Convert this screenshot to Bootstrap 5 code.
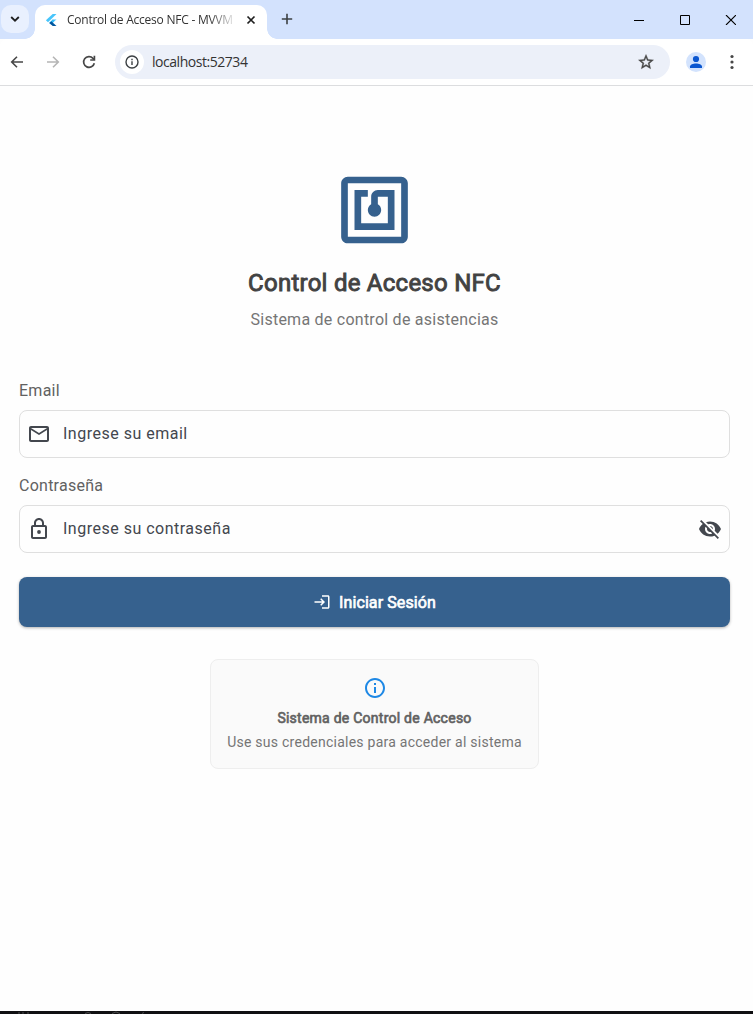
<!DOCTYPE html>
<html lang="es">
<head>
<meta charset="utf-8">
<meta name="viewport" content="width=device-width, initial-scale=1">
<title>Control de Acceso NFC - MVVM</title>
<link href="https://cdn.jsdelivr.net/npm/bootstrap@5.3.0/dist/css/bootstrap.min.css" rel="stylesheet">
<script src="https://cdn.jsdelivr.net/npm/bootstrap@5.3.0/dist/js/bootstrap.bundle.min.js" defer></script>
<style>
html,body{height:100%}
body{font-family:Roboto,sans-serif;background:#fefefe;color:#424242;overflow:hidden}
svg{display:block;flex:none}
.chrome-font{font-family:"Open Sans","Noto Sans",sans-serif}
.tabstrip{height:39px;background:#d3e2fd}
.tab-search{width:28px;height:28px;margin:5px 0 0 1px;border-radius:10px;background:#e9f0fe}
.browser-tab{width:232px;height:34px;margin:5px 0 0 6px;background:#fff;border-radius:10px 10px 0 0;position:relative;padding:0 0 4px 10px}
.browser-tab::before,.browser-tab::after{content:"";position:absolute;bottom:0;width:10px;height:10px}
.browser-tab::before{left:-10px;background:radial-gradient(circle at 0 0,transparent 9.5px,#fff 10px)}
.browser-tab::after{right:-10px;background:radial-gradient(circle at 100% 0,transparent 9.5px,#fff 10px)}
.tab-title{width:168px;margin:0 11px 0 10px;font-size:12px;letter-spacing:-.24px;line-height:18px;color:#333;white-space:nowrap;overflow:hidden;-webkit-mask-image:linear-gradient(90deg,#000 142px,transparent 170px)}
.new-tab{margin:13px 0 0 14px}
.win{width:46px}
.toolbar{height:47px;padding-left:9px;background:#fff;border-bottom:1px solid #dcdddf;border-radius:8px 8px 0 0}
.nav-icons{gap:20px}
.address{width:555px;height:34px;margin-left:18px;padding:0 15px 0 5px;border-radius:17px;background:#ecf0f9}
.site-info{width:24px;height:24px;border-radius:50%;background:#fff}
.url{font-size:14px;letter-spacing:-.46px;margin-left:8px;color:#333;line-height:20px}
.avatar{width:20px;height:20px;margin:0 24px 0 16px;border-radius:50%;background:#d3e3fd;overflow:hidden}
.page{padding:84px 23px 0 19px;height:925px}
.heavy{-webkit-text-stroke:.65px currentColor;font-weight:400}
.headline{font-size:24px;line-height:32px;letter-spacing:.25px;margin:17px 0 0;color:#424242;-webkit-text-stroke-width:.9px}
.tagline{font-size:16px;line-height:24px;letter-spacing:.25px;margin:9px 0 47px;color:#757575}
.field-label{font-size:16px;line-height:24px;letter-spacing:.25px;color:#616161;margin:0 0 7px;display:block}
.field{height:48px;margin-bottom:16px;border:1px solid #dfdfdf;border-radius:8px;padding:0 7px;background:#fefefe;color:#43474e;font-size:16px;letter-spacing:.5px;line-height:24px;cursor:text}
.field span{margin-left:12px}
.login{height:50px;margin-top:24px;border:0;border-radius:8px;background:#36618e;color:#fff;font-size:16px;line-height:20px;box-shadow:0 1px 3px rgba(0,0,0,.3)}
.login:hover{background:#36618e;color:#fff}
.login span{letter-spacing:.1px;padding-top:1px}
.hint{width:329px;height:110px;margin:32px auto 0;padding-top:16px;border:1px solid #eee;border-radius:8px;background:#fafafa;font-size:14px;line-height:20px}
.hint-title{color:#616161;margin-top:8px;letter-spacing:.25px}
.hint-text{color:#757575;margin-top:4px;letter-spacing:.25px}
.bottom-edge{height:3px;background:#101012}
</style>
</head>
<body>
<header class="chrome-font">
  <div class="tabstrip d-flex">
    <div class="tab-search d-flex align-items-center justify-content-center">
      <svg width="10" height="8" viewBox="0 0 10 8" fill="none" stroke="#1f1f1f" stroke-width="1.8"><path d="M1.2 2 5 5.7 8.8 2"/></svg>
    </div>
    <div class="browser-tab d-flex align-items-center">
      <svg width="12" height="14" viewBox="0 0 12 14"><path d="M7.7 1h3.8L3 9.3.9 7.2z" fill="#47c5fb"/><path d="M7.7 6.5h3.8L7.2 10 5 10z" fill="#47c5fb"/><path d="M4.1 9.9 7.7 6.5 9.6 7.8 6.4 11.8z" fill="#38bdf8"/><path d="m4.3 10 2-1.8L11.5 13H7.7z" fill="#00569e"/></svg>
      <div class="tab-title">Control de Acceso NFC - MVVM</div>
      <svg width="10" height="10" viewBox="0 0 10 10" stroke="#1f1f1f" stroke-width="1.7"><path d="m1.5 1.5 7 7m0-7-7 7"/></svg>
    </div>
    <svg class="new-tab" width="12" height="12" viewBox="0 0 12 12" stroke="#3c4043" stroke-width="1.6"><path d="M6 .8v10.4M.8 6h10.4"/></svg>
    <div class="ms-auto d-flex">
      <div class="win d-flex align-items-center justify-content-center"><svg width="12" height="10" viewBox="0 0 12 10"><path d="M2 5h10v1H2z"/></svg></div>
      <div class="win d-flex align-items-center justify-content-center"><svg width="12" height="10" viewBox="0 0 12 10" fill="none" stroke="#000"><path d="M2.5.5h9v9h-9z"/></svg></div>
      <div class="win d-flex align-items-center justify-content-center"><svg width="12" height="10" viewBox="0 0 12 10" stroke="#000" stroke-width="1.1"><path d="m2 0 10 10M12 0 2 10"/></svg></div>
    </div>
  </div>
  <div class="toolbar d-flex align-items-center">
    <div class="nav-icons d-flex">
      <svg width="16" height="16" viewBox="0 0 16 16" fill="none" stroke="#474747" stroke-width="1.6"><path d="M14 8H3M8 2.7 2.7 8 8 13.3"/></svg>
      <svg width="16" height="16" viewBox="0 0 16 16" fill="none" stroke="#b5b5b5" stroke-width="1.6"><path d="M2 8h11M8 2.7 13.3 8 8 13.3"/></svg>
      <svg width="16" height="16" viewBox="0 0 16 16" fill="none" stroke="#474747" stroke-width="1.7"><path d="M13.3 9.2A5.4 5.4 0 1 1 12 4.3l1 1"/><path d="M13.4 1.8V6H9.2"/></svg>
    </div>
    <div class="address d-flex align-items-center">
      <div class="site-info d-flex align-items-center justify-content-center"><svg width="14" height="14" viewBox="0 0 14 14" fill="none" stroke="#3c4043" stroke-width="1.4"><circle cx="7" cy="7" r="6"/><path d="M7 6.3V10M7 3.8v1.4"/></svg></div>
      <div class="url">localhost:52734</div>
      <svg class="ms-auto" width="18" height="18" viewBox="0 0 24 24" fill="#474747" stroke="#474747" stroke-width=".5"><path d="m22 9.24-7.19-.62L12 2 9.19 8.63 2 9.24l5.46 4.73L5.82 21 12 17.27 18.18 21l-1.63-7.03zM12 15.4l-3.76 2.27 1-4.28-3.32-2.88 4.38-.38L12 6.1l1.71 4.04 4.38.38-3.32 2.88 1 4.28z"/></svg>
    </div>
    <div class="avatar"><svg width="20" height="20" viewBox="0 0 20 20" fill="#0b57d0"><circle cx="10" cy="7" r="3.1"/><path d="M4 16v-1.4c0-2 3.2-3.2 6-3.2s6 1.2 6 3.2V16z"/></svg></div>
    <svg width="4" height="16" viewBox="0 0 4 16" fill="#474747"><circle cx="2" cy="2.5" r="1.6"/><circle cx="2" cy="8" r="1.6"/><circle cx="2" cy="13.5" r="1.6"/></svg>
  </div>
</header>
<main class="page">
  <div class="text-center">
    <svg class="mx-auto" width="81" height="80" viewBox="-.15 0 24.3 24" fill="#36618e"><path d="M20 2H4c-1.1 0-2 .9-2 2v16c0 1.1.9 2 2 2h16c1.1 0 2-.9 2-2V4c0-1.1-.9-2-2-2zm0 18H4V4h16v16zM18 6h-5c-1.1 0-2 .9-2 2v2.28c-.6.35-1 .98-1 1.72 0 1.1.9 2 2 2s2-.9 2-2c0-.74-.4-1.38-1-1.72V8h3v8H8V8h2V6H6v12h12V6z"/></svg>
    <h1 class="headline heavy">Control de Acceso NFC</h1>
    <p class="tagline">Sistema de control de asistencias</p>
  </div>
  <form>
    <span class="field-label">Email</span>
    <div class="field d-flex align-items-center">
      <svg width="24" height="24" viewBox="0 0 24 24" fill="#43474e"><path d="M22 6c0-1.1-.9-2-2-2H4c-1.1 0-2 .9-2 2v12c0 1.1.9 2 2 2h16c1.1 0 2-.9 2-2V6zm-2 0-8 5-8-5h16zm0 12H4V8l8 5 8-5v10z"/></svg>
      <span>Ingrese su email</span>
    </div>
    <span class="field-label">Contraseña</span>
    <div class="field d-flex align-items-center">
      <svg width="24" height="24" viewBox="0 0 24 24" fill="#43474e"><path d="M18 8h-1V6c0-2.76-2.24-5-5-5S7 3.24 7 6v2H6c-1.1 0-2 .9-2 2v10c0 1.1.9 2 2 2h12c1.1 0 2-.9 2-2V10c0-1.1-.9-2-2-2zM9 6c0-1.66 1.34-3 3-3s3 1.34 3 3v2H9V6zm9 14H6V10h12v10z"/><circle cx="12" cy="15" r="1.9"/></svg>
      <span>Ingrese su contraseña</span>
      <svg class="ms-auto" width="24" height="24" viewBox="0 0 24 24" fill="#43474e"><path d="M12 7c2.76 0 5 2.24 5 5 0 .65-.13 1.26-.36 1.83l2.92 2.92c1.51-1.26 2.7-2.89 3.43-4.75-1.73-4.39-6-7.5-11-7.5-1.4 0-2.74.25-3.98.7l2.16 2.16C10.74 7.13 11.35 7 12 7zM2 4.27l2.28 2.28.46.46C3.08 8.3 1.78 10.02 1 12c1.73 4.39 6 7.5 11 7.5 1.55 0 3.03-.3 4.38-.84l.42.42L19.73 22 21 20.73 3.27 3 2 4.27zM7.53 9.8l1.55 1.55c-.05.21-.08.43-.08.65 0 1.66 1.34 3 3 3 .22 0 .44-.03.65-.08l1.55 1.55c-.67.33-1.41.53-2.2.53-2.76 0-5-2.24-5-5 0-.79.2-1.53.53-2.2zm4.31-.78 3.15 3.15.02-.16c0-1.66-1.34-3-3-3l-.17.01z"/></svg>
    </div>
    <button type="button" class="login btn w-100 d-flex align-items-center justify-content-center gap-2 p-0">
      <svg width="18" height="18" viewBox="0 0 24 24" fill="#fff"><path d="M11 7 9.6 8.4l2.6 2.6H2v2h10.2l-2.6 2.6L11 17l5-5-5-5zm9 12h-8v2h8c1.1 0 2-.9 2-2V5c0-1.1-.9-2-2-2h-8v2h8v14z"/></svg>
      <span class="heavy">Iniciar Sesión</span>
    </button>
  </form>
  <div class="hint text-center">
    <svg class="mx-auto" width="24" height="24" viewBox="0 0 24 24" fill="#1e88e5"><path d="M11 7h2v2h-2zm0 4h2v6h-2zm1-9C6.48 2 2 6.48 2 12s4.48 10 10 10 10-4.48 10-10S17.52 2 12 2zm0 18c-4.41 0-8-3.59-8-8s3.59-8 8-8 8 3.59 8 8-3.59 8-8 8z"/></svg>
    <div class="hint-title heavy">Sistema de Control de Acceso</div>
    <div class="hint-text">Use sus credenciales para acceder al sistema</div>
  </div>
</main>
<footer class="bottom-edge"><svg width="300" height="3" viewBox="0 0 300 3" fill="none" stroke="#4a4a4c"><path d="M19 1v2M23 1v2M27 2h2M85 2.5q3-2 6 0M112 2.5q4-3 8 0M142 2.5l2-1"/></svg></footer>
</body>
</html>
